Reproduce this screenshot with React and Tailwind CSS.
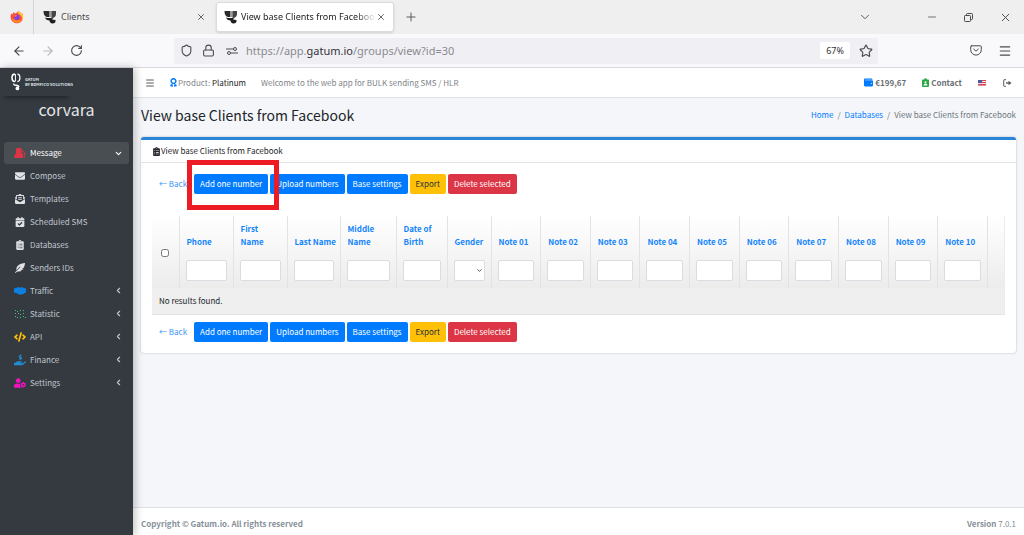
import React from "react";
import {
  FaAward,
  FaCalendarCheck,
  FaClipboardList,
  FaCode,
  FaEnvelope,
  FaEnvelopeOpenText,
  FaFeatherAlt,
  FaHandHoldingUsd,
  FaUserCog,
  FaWallet,
} from "react-icons/fa";
import {
  ArrowLeft,
  ArrowRight,
  ChevronDown,
  ChevronLeft,
  Lock,
  Menu,
  Minus,
  Plus,
  RotateCw,
  Shield,
  Star,
  X,
} from "lucide-react";

const GatumMark = ({ className }) => (
  <svg viewBox="0 0 14 14" className={className} aria-hidden="true">
    <path d="M.5 1h6v6H5C2.200 7 .500 5 .500 1z" fill="#2b2b2b" />
    <path d="M6.500 1h2v6h-2z" fill="#9a9a9a" />
    <path d="M8.500 1H13v3c0 2.500-1.800 4-4.500 4z" fill="#444" />
    <path d="M2 7.500c2 .8 6 .8 8.500 0L9 9.500l3.500.5c.4 2.500-1 3.500-3 3.500S6.500 12 6.500 10.500C4.500 10.300 2.500 9.500 2 7.500z" fill="#1f1f1f" />
  </svg>
);

const FirefoxLogo = () => (
  <svg viewBox="0 0 14 14" className="size-[14px]" aria-hidden="true">
    <path d="M1.200 3.500 2.500 4.500 3.500 2l1.500 1.500C6 3 7.500 3 8 1c2.500 1 3 2 3.500 3l.8-.5C13.500 6 13.500 9 11.500 11.200 9 14 4.500 13.800 2.300 11.200.300 9 .300 6 1.200 3.500z" fill="#ff4b3a" />
    <path d="M8 1c2.500 1 3 2 3.500 3l.8-.5c1.200 2.500 1.200 5-.3 7.200.5-3.500-1-6-4-7.200z" fill="#ffc62e" />
    <path d="M2 8c.5 3 2.500 4.500 5 4.500s4.500-1.500 5-4c-1 1.500-2.500 2.200-4.500 2.200S3.500 9.800 2 8z" fill="#ff9a1f" />
    <circle cx="6.900" cy="7.200" r="2.600" fill="#7a3ff0" />
    <path d="M4 5.500c1.500-.8 2.500-.3 3.500.5-1.200.2-1.500 1-2.800 1z" fill="#ff7a2a" />
  </svg>
);

const GatumLogo = () => (
  <svg viewBox="0 0 10 18" className="h-[18px] w-[10px] text-white" fill="none" stroke="currentColor" aria-hidden="true">
    <path d="M4 1C1.800 1 1 2.500 1 4.700s.8 3.800 3 3.800" strokeWidth="1.600" />
    <path d="M4.500 1v7.500" strokeWidth="1" />
    <path d="M6.500 1C8.200 1 9 2.500 9 4.700s-.8 3.800-2.500 3.800" strokeWidth="1.300" />
    <path d="M3 10.500c-.8 1.200.5 1.700 2 1.800 2 .2 3 .7 3 1.700" strokeWidth="1.300" />
    <circle cx="6.500" cy="15.500" r="1.900" fill="currentColor" stroke="none" />
  </svg>
);

const MessageGroup = ({ className }) => (
  <svg viewBox="0 0 12 12" className={className} fill="currentColor" aria-hidden="true">
    <path d="M2 2.500C2 1.500 2.800 1 3.800 1h3.700v4.500L9 7.500V11H.300V9.500C.300 8 1 7.200 2 7z" />
    <path d="M8.300 3.500 9.500 3v3l-1.200-.8zM9.700 7.200l1.800-3v1.500L10.700 8v3h-1z" />
  </svg>
);

const Handshake = ({ className }) => (
  <svg viewBox="0 0 12 12" className={className} fill="currentColor" aria-hidden="true">
    <path d="M0 3.200h2l1.500-.9h2l.8.4.9-.4h1.600l1.500.9H12v4.600h-1.200c-.5 1-1.300 1.400-2.200 1.300-.6.700-1.400.800-2.200.5-1.200.3-1.800-.2-2.600-.9L1.700 7.800H0z" />
  </svg>
);

const DotsChart = ({ className }) => (
  <svg viewBox="0 0 12 12" className={className} fill="currentColor" aria-hidden="true">
    <path d="M1 2h1v1H1zM3 3h1v1H3zM1 5h1v1H1zM6 2h1v1H6zM9 2h1v1H9zM4 5h1v1H4zM6 6h1v1H6zM9 5h1v1H9zM1 8h1v1H1zM3 9h1v1H3zM6 9h1v1H6zM9 8h1v1H9zM11 9h1v1h-1z" />
  </svg>
);

const Sliders = ({ className }) => (
  <svg viewBox="0 0 12 8" className={className} fill="none" stroke="currentColor" aria-hidden="true">
    <path d="M0 2h7M5 6h7" />
    <circle cx="9" cy="2" r="1.500" />
    <circle cx="3" cy="6" r="1.500" />
  </svg>
);

const Pocket = ({ className }) => (
  <svg viewBox="0 0 12 11" className={className} fill="none" stroke="currentColor" strokeLinecap="round" strokeLinejoin="round" aria-hidden="true">
    <path d="M1.500.8h9c.5 0 .8.300.8.800v3.200a5.300 5.300 0 0 1-10.600 0V1.600c0-.5.300-.8.800-.8z" />
    <path d="M3.700 4 6 6.200 8.300 4" />
  </svg>
);

const Restore = () => (
  <svg viewBox="0 0 9 9" className="size-[9px]" fill="none" stroke="currentColor" aria-hidden="true">
    <rect x=".5" y="2.500" width="6" height="6" rx=".8" />
    <path d="M2.500 2.500V1.300c0-.5.300-.8.800-.8h4.400c.5 0 .8.300.8.800v4.400c0 .5-.3.800-.8.800H6.500" />
  </svg>
);

const LogOut = () => (
  <svg viewBox="0 0 9 8" className="h-2 w-[9px]" fill="none" stroke="currentColor" aria-hidden="true">
    <path d="M3 .7H1.200c-.3 0-.5.200-.5.500v5.600c0 .3.200.5.500.5H3" />
    <path d="M3 4h3" strokeWidth="1.400" />
    <path d="M5.500 1.700 8.500 4l-3 2.300z" fill="currentColor" stroke="none" />
  </svg>
);

const ContactBadge = ({ className }) => (
  <svg viewBox="0 0 8 10" className={className} aria-hidden="true">
    <path d="M1 1.500h1.500a1.500 1.500 0 0 1 3 0H7c.5 0 1 .3 1 1V9c0 .6-.5 1-1 1H1c-.5 0-1-.4-1-1V2.500c0-.7.5-1 1-1z" fill="currentColor" />
    <circle cx="4" cy="4.800" r="1.200" fill="#fff" />
    <path d="M1.800 8.300c0-1.300 1-1.800 2.200-1.800s2.200.5 2.200 1.800z" fill="#fff" />
  </svg>
);

const UsFlag = () => (
  <svg viewBox="0 0 8 6" className="h-[6px] w-[8px]" role="img" aria-label="English">
    <path d="M0 0h8v6H0z" fill="#f3d9dc" />
    <path d="M0 0h8v1H0zM0 2h8v1H0zM0 4h8v1H0zM0 5.500h8V6H0z" fill="#d0495a" />
    <path d="M0 0h4v3H0z" fill="#4a5a96" />
  </svg>
);

const submenu = [
  { label: "Compose", icon: FaEnvelope },
  { label: "Templates", icon: FaEnvelopeOpenText },
  { label: "Scheduled SMS", icon: FaCalendarCheck },
  { label: "Databases", icon: FaClipboardList },
  { label: "Senders IDs", icon: FaFeatherAlt },
];

const sections = [
  { label: "Traffic", icon: Handshake, color: "text-[#0d7fe0]" },
  { label: "Statistic", icon: DotsChart, color: "text-[#3fc380]" },
  { label: "API", icon: FaCode, color: "text-[#ffc107]" },
  { label: "Finance", icon: FaHandHoldingUsd, color: "text-[#1f8fd6]" },
  { label: "Settings", icon: FaUserCog, color: "text-[#f012be]" },
];

// note columns have no width of their own and share what is left
const columns = [
  { label: "Phone", width: "w-[54px]" },
  { label: "First Name", width: "w-[54px]" },
  { label: "Last Name", width: "w-[53px]", nowrap: true },
  { label: "Middle Name", width: "w-[56px]" },
  { label: "Date of Birth", width: "w-[51px]" },
  { label: "Gender", width: "w-[44px]", select: true },
  ...["01", "02", "03", "04", "05", "06", "07", "08", "09", "10"].map((n) => ({
    label: `Note ${n}`,
  })),
];

const BrowserChrome = () => (
  <header className="font-['Noto_Sans','Open_Sans',sans-serif] text-[#4a4a4f]">
    <div className="flex h-[34px] items-center bg-[#efefef]">
      <div className="flex h-full w-[34px] items-center justify-center border-r border-[#d4d4d4]">
        <FirefoxLogo />
      </div>
      <div className="flex w-[182px] items-center pl-[9px] pr-[10px]">
        <GatumMark className="size-[14px]" />
        <span className="ml-1 flex-1 text-[9px] leading-4">Clients</span>
        <button type="button" aria-label="Close tab">
          <X size={10} strokeWidth={2} />
        </button>
      </div>
      <div className="flex h-[30px] w-[178px] items-center rounded-[3px] border border-[#dcdcdc] bg-white pl-[7px] pr-[7px] shadow-sm">
        <GatumMark className="size-[14px] shrink-0" />
        <span className="ml-[3px] flex-1 overflow-hidden whitespace-nowrap text-[9px] leading-4 text-[#222] [mask-image:linear-gradient(to_right,#000_85%,transparent)]">
          View base Clients from Facebook
        </span>
        <button type="button" aria-label="Close tab">
          <X size={10} strokeWidth={2} />
        </button>
      </div>
      <button type="button" aria-label="New tab" className="ml-[10px]">
        <Plus size={14} strokeWidth={1.5} />
      </button>
      <div className="ml-auto flex items-center pr-3">
        <button type="button" aria-label="List all tabs" className="mr-[54px]">
          <ChevronDown size={14} strokeWidth={1.5} />
        </button>
        <button type="button" aria-label="Minimize" className="mr-[26px]">
          <Minus size={12} strokeWidth={1.5} />
        </button>
        <button type="button" aria-label="Restore" className="mr-[26px]">
          <Restore />
        </button>
        <button type="button" aria-label="Close">
          <X size={13} strokeWidth={1.8} />
        </button>
      </div>
    </div>
    <div className="flex h-[34px] items-center border-b border-[#dcdae0] bg-[#f9f9fb] pr-3">
      <button type="button" aria-label="Back" className="ml-3">
        <ArrowLeft size={14} strokeWidth={2} />
      </button>
      <button type="button" aria-label="Forward" className="ml-[15px] text-[#b8b8bc]">
        <ArrowRight size={14} strokeWidth={2} />
      </button>
      <button type="button" aria-label="Reload" className="ml-[15px]">
        <RotateCw size={13} strokeWidth={2} />
      </button>
      <div className="ml-[91px] flex h-[26px] flex-1 items-center rounded-[3px] bg-[#f0f0f4] pl-[6px] pr-[5px]">
        <Shield size={13} strokeWidth={2} />
        <Lock size={13} strokeWidth={2} className="ml-[9px]" />
        <Sliders className="ml-[11px] h-2 w-3" />
        <span className="ml-2 flex-1 text-[11px] leading-4 text-[#8a8a90]">
          https://app.<span className="text-[#333338]">gatum.io</span>/groups/view?id=30
        </span>
        <span className="rounded-[2px] bg-white px-[6px] text-[9px] leading-[17px] text-[#333]">67%</span>
        <Star size={14} strokeWidth={2} className="ml-[9px]" />
      </div>
      <button type="button" aria-label="Pocket" className="ml-[92px]">
        <Pocket className="h-[11px] w-3" />
      </button>
      <button type="button" aria-label="Menu" className="ml-4">
        <Menu size={14} strokeWidth={2} />
      </button>
    </div>
  </header>
);

const Sidebar = () => (
  <aside className="z-10 w-[133px] shrink-0 bg-[#343a40] text-[#c2c7d0] shadow-[2px_0_8px_rgba(0,0,0,0.25)]">
    <a href="#home" className="mr-[60px] flex h-[28px] items-center gap-1 pl-[11px] shadow-[0_6px_5px_-5px_rgba(0,0,0,0.5)]">
      <GatumLogo />
      <span className="whitespace-nowrap text-[4px] font-bold leading-[5px] text-[#dfe2e5]">
        GATUM
        <br />
        BY BDMFICO SOLUTIONS
      </span>
    </a>
    <p className="mt-px text-center text-[16px] leading-6 text-[#e4e6e9]">corvara</p>
    <nav className="mt-[21px] px-1 text-[8px]">
      <a href="#message" className="flex h-[22px] items-center rounded-[3px] bg-[#494e53] pl-[10px] pr-1.5 text-white">
        <MessageGroup className="size-3 text-[#dc3545]" />
        <span className="ml-1 flex-1">Message</span>
        <ChevronDown size={9} strokeWidth={3} />
      </a>
      <ul>
        {submenu.map(({ label, icon: Icon }) => (
          <li key={label}>
            <a href="#list" className="flex h-[23px] items-center pl-[11px]">
              <Icon className="size-[10px] text-[#dfe2e6]" />
              <span className="ml-[5px]">{label}</span>
            </a>
          </li>
        ))}
        {sections.map(({ label, icon: Icon, color }) => (
          <li key={label}>
            <a href="#section" className="flex h-[23px] items-center pl-[10px] pr-1.5">
              <Icon className={`size-3 ${color}`} />
              <span className="ml-1 flex-1">{label}</span>
              <ChevronLeft size={9} strokeWidth={3} />
            </a>
          </li>
        ))}
      </ul>
    </nav>
  </aside>
);

const Navbar = () => (
  <div className="flex h-[30px] items-center border-b border-[#dee2e6] bg-white pl-3 pr-3 text-[8px] text-[#808488]">
    <button type="button" aria-label="Toggle sidebar" className="text-[#55595d]">
      <Menu size={10} strokeWidth={2.5} />
    </button>
    <span className="ml-[14px] flex items-center">
      <FaAward className="size-[9px] text-[#007bff]" />
      <span>
        Product: <span className="text-[#222]">Platinum</span>
      </span>
    </span>
    <span className="ml-[15px] flex-1">Welcome to the web app for BULK sending SMS / HLR</span>
    <a href="#balance" className="flex items-center font-bold text-[#6c7075]">
      <FaWallet className="mr-0.5 size-[9px] text-[#007bff]" />
      €199,67
    </a>
    <a href="#contact" className="ml-4 flex items-center font-bold text-[#6c7075]">
      <ContactBadge className="mr-0.5 h-[9px] w-[7px] text-[#28a745]" />
      Contact
    </a>
    <button type="button" className="ml-4">
      <UsFlag />
    </button>
    <button type="button" aria-label="Log out" className="ml-[17px] text-[#55595d]">
      <LogOut />
    </button>
  </div>
);

const buttons = [
  { label: "Add one number", style: "bg-[#007bff] text-white" },
  { label: "Upload numbers", style: "bg-[#007bff] text-white" },
  { label: "Base settings", style: "bg-[#007bff] text-white" },
  { label: "Export", style: "bg-[#ffc107] text-[#1f2d3d]" },
  { label: "Delete selected", style: "bg-[#dc3545] text-white" },
];

const ActionBar = ({ highlight }) => (
  <div className="flex items-center gap-0.5">
    <a href="#back" className="pl-[7px] pr-[5px] text-[#3a94f5]">
      ← Back
    </a>
    {buttons.map(({ label, style }, index) => (
      <div key={label} className="relative">
        <button type="button" className={`h-5 whitespace-nowrap rounded-[2px] px-1.5 ${style}`}>
          {label}
        </button>
        {highlight && index === 0 && (
          <div className="pointer-events-none absolute -bottom-4 -left-[7px] -right-[11px] -top-3.5 z-10 border-[5px] border-[#ed1c24]" />
        )}
      </div>
    ))}
  </div>
);

const ClientsTable = () => (
  <table className="w-full table-fixed border-collapse border-r border-[#ececec] text-left">
    <colgroup>
      <col className="w-[27px]" />
      {columns.map(({ label, width }) => (
        <col key={label} className={width} />
      ))}
      <col className="w-[17px]" />
    </colgroup>
    <thead className="bg-linear-to-b from-white to-[#ececec]">
      <tr className="h-[38px]">
        <th rowSpan={2} className="border-r border-[#e3e3e3] text-center align-middle">
          <input type="checkbox" aria-label="Select all" className="size-2 align-middle" />
        </th>
        {columns.map(({ label, nowrap }) => (
          <th
            key={label}
            className={`border-r border-[#e3e3e3] py-1.5 pl-[7px] align-bottom font-bold leading-[13px] ${nowrap ? "whitespace-nowrap pr-0" : "pr-[7px]"}`}
          >
            <a href="#sort" className="text-[#1485fb]">
              {label}
            </a>
          </th>
        ))}
        <th rowSpan={2} />
      </tr>
      <tr>
        {columns.map(({ label, select }) => (
          <td key={label} className="border-r border-[#e3e3e3] px-[6px] pb-[7px] pt-1.5">
            {select ? (
              <div className="relative">
                <select aria-label={label} className="block h-[21px] w-full appearance-none rounded-[2px] border border-[#d9dce0] bg-white">
                  <option value=""></option>
                </select>
                <ChevronDown size={7} strokeWidth={3} className="pointer-events-none absolute right-0.5 top-[7px] text-[#444]" />
              </div>
            ) : (
              <input type="text" aria-label={label} className="block h-[21px] w-full rounded-[2px] border border-[#d9dce0] bg-white px-1" />
            )}
          </td>
        ))}
      </tr>
    </thead>
    <tbody>
      <tr className="h-[26px] bg-[#efefef]">
        <td colSpan={columns.length + 2} className="border-b border-[#e3e3e3] px-[7px]">
          No results found.
        </td>
      </tr>
    </tbody>
  </table>
);

export default function App() {
  return (
    <div className="flex min-h-screen flex-col bg-[#f4f6f9]">
      <BrowserChrome />
      <div className="flex flex-1 font-['Noto_Sans_CJK_SC',sans-serif] text-[8px] leading-3 text-[#212529]">
        <Sidebar />
        <div className="flex min-w-0 flex-1 flex-col">
          <Navbar />
          <main className="flex-1 px-2">
            <div className="flex h-[39px] items-center justify-between pb-1.5">
              <h1 className="text-[14px] leading-5">View base Clients from Facebook</h1>
              <nav aria-label="Breadcrumb" className="flex gap-1 text-[#6c757d]">
                <a href="#home" className="text-[#007bff]">Home</a>
                <span>/</span>
                <a href="#databases" className="text-[#007bff]">Databases</a>
                <span>/</span>
                <span>View base Clients from Facebook</span>
              </nav>
            </div>
            <section className="rounded-[3px] border-t-[3px] border-[#2a84d8] bg-white shadow-[0_0_2px_rgba(0,0,0,0.3)]">
              <h2 className="flex h-[23px] items-center border-b border-[#e4e4e6] px-[11px]">
                <FaClipboardList className="size-[9px]" />
                View base Clients from Facebook
              </h2>
              <div className="px-[11px] py-[11px]">
                <ActionBar highlight />
                <div className="mb-[7px] mt-[22px]">
                  <ClientsTable />
                </div>
                <ActionBar />
              </div>
            </section>
          </main>
          <footer className="flex h-7 items-center justify-between border-t border-[#dee2e6] bg-white px-2 pt-1 text-[#869099]">
            <strong>Copyright © Gatum.io. All rights reserved</strong>
            <span>
              <strong>Version</strong> 7.0.1
            </span>
          </footer>
        </div>
      </div>
    </div>
  );
}
